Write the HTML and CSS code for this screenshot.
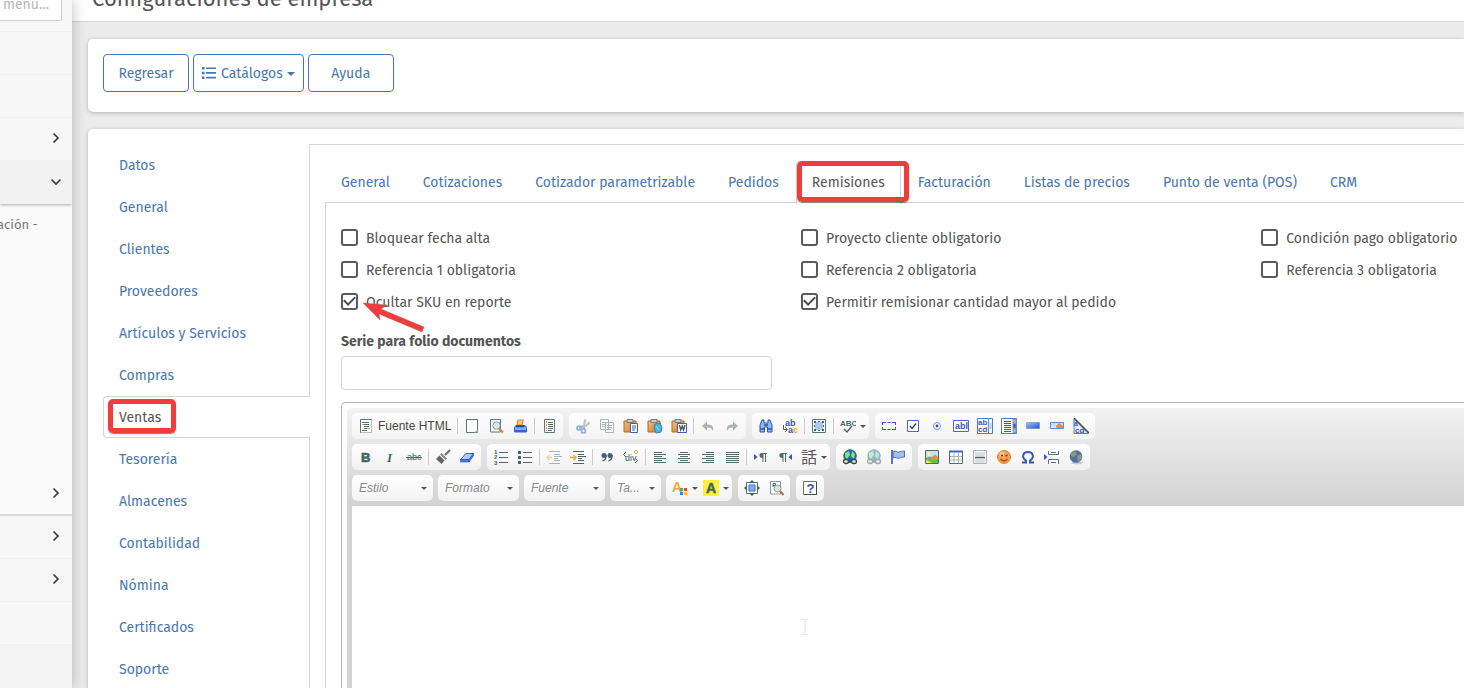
FILE: index.html
```html
<!DOCTYPE html>
<html lang="es">
<head>
<meta charset="utf-8">
<title>Configuraciones de empresa</title>
<link rel="stylesheet" href="styles.css">
</head>
<body>
<svg class="paints" aria-hidden="true">
  <defs>
    <linearGradient id="gBlue" x1="0" y1="0" x2="1" y2="1"><stop offset="0" stop-color="#9cc4f4"/><stop offset="1" stop-color="#2a50c8"/></linearGradient>
    <linearGradient id="gClip" x1="0" y1="0" x2="1" y2="1"><stop offset="0" stop-color="#f8c27c"/><stop offset="1" stop-color="#cf7420"/></linearGradient>
  </defs>
</svg>
<svg class="sprite" aria-hidden="true">
  <symbol id="right" viewBox="0 0 16 16"><path d="M5.500 3.500 10 8l-4.500 4.500" fill="none" stroke="#3b3b3b" stroke-width="1.700"/></symbol>
  <symbol id="down" viewBox="0 0 16 16"><path d="M3.500 5.500 8 10l4.500-4.500" fill="none" stroke="#3b3b3b" stroke-width="1.700"/></symbol>
  <symbol id="list" viewBox="0 0 16 16"><path d="M1 2h2.500v2.500H1zm0 4.700h2.500v2.500H1zm0 4.700h2.500v2.500H1zM5 2.400h10v1.700H5zm0 4.700h10v1.700H5zm0 4.700h10v1.700H5z" fill="#4877b5"/></symbol>
  <symbol id="source" viewBox="0 0 16 16"><path d="M2.500 1.500h11v13h-11z" fill="#fff" stroke="#5d7777"/><path d="M13.500 2v12.500H3" fill="none" stroke="#b8c2c2"/><path d="M4 4.500h7M6 6.500h5M6 8.500h5M6 10.500h3M4 12.500h5" stroke="#526c6c"/><path d="M4 6.500h2M9 10.500h3" stroke="#f0a040"/></symbol>
  <symbol id="new" viewBox="0 0 16 16"><path d="M2.500 1.500h11v13h-11z" fill="#fcfcfc" stroke="#5d7777"/><path d="M10 14.500l3.500-3v3z" fill="#aab8b8"/></symbol>
  <symbol id="preview" viewBox="0 0 16 16"><path d="M2.500 1.500h10v12.500h-10z" fill="#fff" stroke="#5d7777"/><circle cx="8.500" cy="7.500" r="3.700" fill="#dfe6ea" stroke="#8a9ba0"/><path d="M11 10.500l4 4" stroke="#c98744" stroke-width="2.200"/></symbol>
  <symbol id="print" viewBox="0 0 16 16"><path d="M5 7l1-5h5l-1 5z" fill="#fbc583" stroke="#e08f38" stroke-width="1.200"/><path d="M4 7.500h9l1.500 2v4.500h-12V9.500z" fill="#7fb0f2" stroke="#3a62c8"/><path d="M4 8.500h8.500" stroke="#1f3f92" stroke-width="1.500"/><path d="M3 13h11" stroke="#3a62d8" stroke-width="2"/></symbol>
  <symbol id="template" viewBox="0 0 16 16"><path d="M3.500 1.500h10v13h-10z" fill="#fff" stroke="#5d7777"/><path d="M7 4.500h5M7 6.500h5M7 8.500h5M7 10.500h5M7 12.500h4" stroke="#526c6c"/><path d="M5.500 3v10" stroke="#f0a040" stroke-dasharray="2 1"/></symbol>
  <symbol id="cut" viewBox="0 0 16 16" opacity=".55"><path d="M9 1l-1 7 1.500 1 2-7zM14 3l-6 6 1 1 6-4z" fill="#8da0a4"/><path d="M8 8l-4 2M9 9v3" stroke="#4a72cc" stroke-width="2"/><circle cx="4" cy="10" r="2" fill="none" stroke="#4a72cc" stroke-width="1.700"/><circle cx="8.500" cy="13" r="2" fill="none" stroke="#4a72cc" stroke-width="1.700"/></symbol>
  <symbol id="copy" viewBox="0 0 16 16" opacity=".5"><path d="M1.500 1.500h8v10h-8zM6.500 4.500h8v10h-8z" fill="#fff" stroke="#5d7777"/><path d="M3 4.500h4M3 6.500h3M3 8.500h3M8 7.500h5M8 9.500h5M8 11.500h4" stroke="#5d7777"/></symbol>
  <symbol id="clip" viewBox="0 0 16 16"><path d="M1 3h12v11H1z" fill="url(#gClip)" stroke="#ad6a28"/><path d="M4 1.500h6v3H4z" fill="#c9ced2" stroke="#777"/></symbol>
  <symbol id="paste" viewBox="0 0 16 16"><use href="#clip"/><path d="M7.500 5.500h7v9h-7z" fill="#fff" stroke="#3d62bd"/><path d="M9 8h4M9 10h4M9 12h3" stroke="#4b62ba"/></symbol>
  <symbol id="pastetext" viewBox="0 0 16 16"><use href="#clip"/><path d="M8 6l5-1 2 4-1 5-5 1-2-5z" fill="#48b5dc" stroke="#298abf"/><path d="M9 8l3 4" stroke="#a5e2f1"/></symbol>
  <symbol id="pasteword" viewBox="0 0 16 16"><use href="#clip"/><path d="M6.500 5.500h9v9h-9z" fill="#fff" stroke="#3d62bd"/><path d="M8.500 7l1.200 5 1.500-4 1.300 4 1.500-5" fill="none" stroke="#445566" stroke-width="1.300"/></symbol>
  <symbol id="undo" viewBox="0 0 16 16"><path d="M2 8l5-4.500V6.500c5 0 7 2 6 6.500-1-2.500-2.500-3.500-6-3.500v3z" fill="#a8b5b5"/></symbol>
  <symbol id="redo" viewBox="0 0 16 16"><path d="M14 8L9 3.500V6.500c-5 0-7 2-6 6.500 1-2.500 2.500-3.500 6-3.500v3z" fill="#a8b5b5"/></symbol>
  <symbol id="find" viewBox="0 0 16 16"><path d="M4 2h2v3h4V2h2l2 5v7H9.500V9h-3v5H2V7z" fill="#8dbcf5" stroke="#304eaa"/><path d="M6 7h4M2 11h4M10 11h4" stroke="#304eaa" stroke-width="1.500"/></symbol>
  <symbol id="replace" viewBox="0 0 16 16"><text x="3" y="8" font-size="9" font-weight="bold" fill="#4351b5">ab</text><path d="M1.500 7v4.500H5M3 9l2.500 2.500L3 14" fill="none" stroke="#4351b5"/><text x="6" y="15" font-size="9" font-weight="bold" fill="#4351b5">a<tspan fill="#f0a040">c</tspan></text></symbol>
  <symbol id="selectall" viewBox="0 0 16 16"><path d="M1.500 1.500h13v13h-13z" fill="#fff" stroke="#5a7474"/><path d="M4 4h8v8H4z" fill="#a9c7f3"/><path d="M3 3h2v2H3zm8 0h2v2h-2zM3 11h2v2H3zm8 0h2v2h-2zM7 3h2v1H7zm0 9h2v1H7zM3 7h1v2H3zm9 0h1v2h-1z" fill="#456464"/></symbol>
  <symbol id="spell" viewBox="0 0 16 16"><text x="0" y="8" font-size="8" font-weight="bold" fill="#4d6868">ABC</text><path d="M4 11l3 3 5-6" fill="none" stroke="#4d6868" stroke-width="1.500"/></symbol>
  <symbol id="form" viewBox="0 0 16 16"><path d="M2 4.500h12M2 11.500h12" stroke="#4351b5" stroke-dasharray="3 1.500"/><path d="M1.500 4v3M1.500 9v3M14.500 4v3M14.500 9v3" stroke="#4351b5"/></symbol>
  <symbol id="check" viewBox="0 0 16 16"><path d="M2.500 2.500h11v11h-11z" fill="#fff" stroke="#4b67c8"/><path d="M5 8l2 2.500 4-5" fill="none" stroke="#443366" stroke-width="1.300"/></symbol>
  <symbol id="radio" viewBox="0 0 16 16"><circle cx="8" cy="8" r="3.500" fill="#fff" stroke="#7b8ee0"/><circle cx="8" cy="8" r="1.400" fill="#3540a8"/></symbol>
  <symbol id="textfield" viewBox="0 0 16 16"><path d="M.5 2.500h15v11H.5z" fill="#fff" stroke="#4b67c8"/><text x="2" y="11" font-size="9" font-weight="bold" fill="#4351b5">abl</text></symbol>
  <symbol id="textarea" viewBox="0 0 16 16"><path d="M.5.5h15v15H.5z" fill="#fff" stroke="#4b7ed8"/><path d="M11.500 0v16" stroke="#5c8fdf"/><path d="M12.500 5h2v6h-2z" fill="#a9c7f3"/><text x="1" y="7" font-size="8" font-weight="bold" fill="#4351b5">ab</text><text x="1" y="14" font-size="8" font-weight="bold" fill="#4351b5">cd</text></symbol>
  <symbol id="select" viewBox="0 0 16 16"><path d="M.5.5h15v15H.5z" fill="#fff" stroke="#4b7ed8"/><path d="M11.500 1h4v14h-4z" fill="#7a9de0"/><path d="M3 3.500h7M3 5.500h7M3 7.500h7M3 9.500h7M3 11.500h7M3 13.500h7" stroke="#4351b5"/><path d="M12.500 3h2M12.500 13h2" stroke="#f3b05a" stroke-width="2"/><path d="M12.500 6h2v4h-2z" fill="#3f55bd"/></symbol>
  <symbol id="button" viewBox="0 0 16 16"><path d="M1.500 4.500h13v6h-13z" fill="url(#gBlue)" stroke="#5a86de" stroke-width=".6"/></symbol>
  <symbol id="imgbutton" viewBox="0 0 16 16"><path d="M1.500 4.500h13v6h-13z" fill="#c7def8" stroke="#5a8ad8"/><path d="M7 10V8l3-3 4 3v2z" fill="#ef8c3a"/><path d="M2 10c2-3 4-2 6 0z" fill="#fbeec0"/></symbol>
  <symbol id="hidden" viewBox="0 0 16 16"><path d="M1 1l14 14.500H1z" fill="#e7efff" stroke="#4b7ed8"/><path d="M1 0l15 15" stroke="#555" stroke-width="1.500"/><text x="1" y="8" font-size="7" font-weight="bold" fill="#4351b5">a</text><text x="2" y="15" font-size="8" font-weight="bold" fill="#4351b5">cd</text></symbol>
  <symbol id="bold" viewBox="0 0 16 16"><text x="3" y="12.500" font-size="13" font-weight="900" fill="#456464" stroke="#456464" stroke-width=".6">B</text></symbol>
  <symbol id="italic" viewBox="0 0 16 16"><text x="5" y="12.500" font-size="13" font-weight="bold" font-style="italic" class="serif" fill="#456464">I</text></symbol>
  <symbol id="strike" viewBox="0 0 16 16"><text x="1" y="11" font-size="9" fill="#456464">abc</text><path d="M0 8.500h16" stroke="#456464"/></symbol>
  <symbol id="brush" viewBox="0 0 16 16"><path d="M15 1L10 6" stroke="#777" stroke-width="2.400"/><path d="M6.500 4l5.500 5.500-1.500 1.500L5 5.500z" fill="#888"/><path d="M4.500 6.500l5 5L6.500 15 1 10z" fill="#666"/></symbol>
  <symbol id="eraser" viewBox="0 0 16 16"><path d="M1.500 10.500L7 4.500h7.500L10 10.500z" fill="#a9cbf6" stroke="#3d62c5"/><path d="M1.500 10.500H10v2.500H1.500zM10 13l4.500-6V4.500L10 10.500z" fill="#4c78e0" stroke="#2c4fb5" stroke-width=".6"/></symbol>
  <symbol id="ol" viewBox="0 0 16 16"><path d="M6 3.500h9M6 8.500h9M6 13.500h9" stroke="#526c6c"/><g font-size="6" font-weight="bold" fill="#456464"><text x="1" y="5">1</text><text x="1" y="10">2</text><text x="1" y="15.500">3</text></g></symbol>
  <symbol id="ul" viewBox="0 0 16 16"><path d="M6 3.500h9M6 8.500h9M6 13.500h9" stroke="#526c6c"/><path d="M1 2h3v3H1zm0 5h3v3H1zm0 5h3v3H1z" fill="#456464"/></symbol>
  <symbol id="indent" viewBox="0 0 16 16"><path d="M3 2.500h11M8 5.500h6M8 7.500h8M8 9.500h4M8 11.500h6M3 14.500h11" stroke="#456464"/><path d="M0 8.500h5M3.500 6l2.500 2.500L3.500 11" fill="none" stroke="#f0a040" stroke-width="1.400"/></symbol>
  <symbol id="outdent" viewBox="0 0 16 16" opacity=".45"><path d="M3 2.500h11M8 5.500h6M8 7.500h8M8 9.500h4M8 11.500h6M3 14.500h11" stroke="#456464"/><path d="M1 8.500h5M3.500 6L1 8.500 3.500 11" fill="none" stroke="#f0a040" stroke-width="1.400"/></symbol>
  <symbol id="quote" viewBox="0 0 16 16"><circle cx="5" cy="6.500" r="2.500" fill="#456464"/><circle cx="11" cy="6.500" r="2.500" fill="#456464"/><path d="M7 6c.5 3-1 5-3.500 6M13 6c.5 3-1 5-3.500 6" fill="none" stroke="#456464" stroke-width="1.300"/></symbol>
  <symbol id="div" viewBox="0 0 16 16"><path d="M3 3L.5 5.500 3 8M12 9l2.500 2.500L12 14" fill="none" stroke="#456464"/><text x="2" y="12" font-size="9" fill="#456464">div</text><path d="M13 1l2 2-2 2-2-2z" fill="none" stroke="#f0a040"/></symbol>
  <symbol id="aleft" viewBox="0 0 16 16"><path d="M2 3.500h8M2 5.500h12M2 7.500h8M2 9.500h12M2 11.500h8M2 13.500h12" stroke="#526c6c"/></symbol>
  <symbol id="acenter" viewBox="0 0 16 16"><path d="M4 3.500h8M2 5.500h12M4 7.500h8M2 9.500h12M4 11.500h8M2 13.500h12" stroke="#526c6c"/></symbol>
  <symbol id="aright" viewBox="0 0 16 16"><path d="M6 3.500h8M2 5.500h12M6 7.500h8M2 9.500h12M6 11.500h8M2 13.500h12" stroke="#526c6c"/></symbol>
  <symbol id="ajust" viewBox="0 0 16 16"><path d="M2 3.500h13M2 5.500h13M2 7.500h13M2 9.500h13M2 11.500h13M2 13.500h13" stroke="#526c6c"/></symbol>
  <symbol id="pil" viewBox="0 0 16 16"><path d="M8.500 4H14v1h-1v8h-1V5h-1.500v8h-1V9C5.500 9 5.500 4 8.500 4z" fill="#526c6c"/></symbol>
  <symbol id="ltr" viewBox="0 0 16 16"><path d="M1 5l3.500 3L1 11z" fill="#4351b5"/><use href="#pil"/></symbol>
  <symbol id="rtl" viewBox="0 0 16 16"><use href="#pil" x="-4" width="16" height="16"/><path d="M15 5l-3.500 3L15 11z" fill="#4351b5"/></symbol>
  <symbol id="lang" viewBox="0 0 16 16"><text x="0" y="14" font-size="16" class="cjk" fill="#5a5a5a">話</text></symbol>
  <symbol id="link" viewBox="0 0 16 16"><circle cx="8" cy="7" r="6.200" fill="#2d62c4" stroke="#254c8e"/><path d="M3 4l4-2 1 4-3 4-2-2zM10 2l3 3-1 5-3-3z" fill="#7bea6b"/><path d="M5 12.500h6" stroke="#324b4b" stroke-width="2"/><rect x="1.500" y="10.500" width="5" height="4" rx="2" fill="#dfe8e8" stroke="#324b4b" stroke-width="1.300"/><rect x="9.500" y="10.500" width="5" height="4" rx="2" fill="#dfe8e8" stroke="#324b4b" stroke-width="1.300"/></symbol>
  <symbol id="unlink" viewBox="0 0 16 16" opacity=".45"><use href="#link"/></symbol>
  <symbol id="anchor" viewBox="0 0 16 16"><path d="M2 1v14" stroke="#3b4fb8" stroke-width="1.600"/><path d="M3 2.500c3-1.500 4 1.500 6 .5s3-.5 5.500-1v6c-3 .5-3 0-5 1s-4-1.500-6.500 0z" fill="#a9bfdf" stroke="#4c6bc4"/></symbol>
  <symbol id="image" viewBox="0 0 16 16"><path d="M1.500 1.500h13v13h-13z" fill="#bfe0f8" stroke="#5a6a5a"/><path d="M2 9c4-3 7 0 12-1v6H2z" fill="#70b848"/><circle cx="5" cy="5" r="2" fill="#fff2a0"/><path d="M8 11V8l3-2.500L14 8v3z" fill="#f08c3a"/><path d="M2 14v-3l7 3z" fill="#f7e070"/></symbol>
  <symbol id="table" viewBox="0 0 16 16"><path d="M1.500 2.500h13v12h-13z" fill="#fff" stroke="#5a6e6e"/><path d="M1 2.500h14" stroke="#3b62d0" stroke-width="2"/><path d="M2 7.500h12M2 11h12M6 4v10M10.500 4v10" stroke="#a9b3b3"/></symbol>
  <symbol id="hr" viewBox="0 0 16 16"><path d="M1.500 1.500h13v13h-13z" fill="#fff" stroke="#aab3b3"/><path d="M3 4h10M3 6h10M3 11h10M3 13h10" stroke="#b6bebe"/><path d="M3 8.500h10" stroke="#456464" stroke-width="1.600"/></symbol>
  <symbol id="smiley" viewBox="0 0 16 16"><circle cx="8" cy="8" r="6.500" fill="#f5a04a" stroke="#de8230"/><circle cx="6" cy="5" r="2.500" fill="#fbc98b"/><path d="M5 6.500h2M9.500 6.500h2" stroke="#6b3d10" stroke-width="1.500"/><path d="M4.500 10c2 2.500 5 2.500 7 0" fill="none" stroke="#b8431d" stroke-width="1.500"/></symbol>
  <symbol id="omega" viewBox="0 0 16 16"><path d="M2 13.500h4v-2C1 8 3 3 8 3s7 5 2 8.500v2h4" fill="none" stroke="#3b55c0" stroke-width="2"/></symbol>
  <symbol id="break" viewBox="0 0 16 16"><path d="M4.500 2v3.500h10V2M4.500 15v-4.500h10V15" fill="#fff" stroke="#5d7777"/><path d="M7 3.500h5M7 13.500h5" stroke="#5d7777"/><path d="M0 5l3.500 3L0 11z" fill="#3b55c0"/></symbol>
  <symbol id="globe" viewBox="0 0 16 16"><ellipse cx="9" cy="14" rx="6" ry="1.500" fill="#ccc"/><circle cx="8" cy="7.500" r="6.300" fill="#4c71a8"/><path d="M3 4l4-2 2 3-3 3-3-1zM9 7l4-2 1 4-4 4z" fill="#8b9a78"/></symbol>
  <symbol id="color" viewBox="0 0 16 16"><text x="0" y="12" font-size="14" font-weight="bold" fill="#f0a24c">A</text><path d="M8 8h3v3H8z" fill="#48b648"/><path d="M12 8h3v3h-3z" fill="#ee4040"/><path d="M8 12h3v3H8z" fill="#3c7bea"/><path d="M12 12h3v3h-3z" fill="#f7c325"/></symbol>
  <symbol id="bgcolor" viewBox="0 0 16 16"><path d="M0 0h16v16H0z" fill="#fff23a"/><text x="3" y="13" font-size="14" font-weight="bold" fill="#456464" stroke="#456464" stroke-width=".5">A</text></symbol>
  <symbol id="maximize" viewBox="0 0 16 16"><path d="M2.500 2.500h11v11h-11z" fill="#fff" stroke="#4f6b78"/><path d="M5 5h6v6H5z" fill="#7fb1f5" stroke="#3b6fd0"/><path d="M8 0l2.500 2.500h-5zM8 16l2.500-2.500h-5zM0 8l2.500-2.500v5zM16 8l-2.500-2.500v5z" fill="#456464"/></symbol>
  <symbol id="blocks" viewBox="0 0 16 16"><path d="M2.500 1.500h10v12.500h-10z" fill="#fff" stroke="#8a9999"/><path d="M5 7V3.500h2.500v2H5" fill="none" stroke="#456464"/><circle cx="9.500" cy="8.500" r="3.500" fill="#dfe3e6" stroke="#999"/><path d="M12 11l3.500 4" stroke="#a87444" stroke-width="2"/></symbol>
  <symbol id="about" viewBox="0 0 16 16"><path d="M1.500 1.500h13v13h-13z" fill="#fff" stroke="#5d7777"/><path d="M14.500 2v12.500H2" fill="none" stroke="#394f50"/><text x="4.500" y="13" font-size="13" font-weight="bold" fill="#3b48b8">?</text></symbol>
</svg>

<div class="app">
  <aside class="side">
    <div class="side-search"><input type="text" aria-label="Buscar en el menú" placeholder="l menu..."></div>
    <div class="side-row"></div>
    <div class="side-row"></div>
    <div class="side-row"><svg><use href="#right"/></svg></div>
    <div class="side-row side-open"><svg><use href="#down"/></svg></div>
    <div class="side-sub">
      <span class="side-text">ación -</span>
      <div class="side-row side-last"><svg><use href="#right"/></svg></div>
    </div>
    <div class="side-row"><svg><use href="#right"/></svg></div>
    <div class="side-row"><svg><use href="#right"/></svg></div>
    <div class="side-row"></div>
    <div class="side-rest"></div>
  </aside>

  <main class="main">
    <header class="head"><h1>Configuraciones de empresa</h1></header>

    <section class="card actions">
      <button type="button" class="btn">Regresar</button>
      <button type="button" class="btn btn-menu"><svg><use href="#list"/></svg>Catálogos<i class="caret"></i></button>
      <button type="button" class="btn">Ayuda</button>
    </section>

    <section class="card config">
      <nav class="vtabs">
        <a href="#">Datos</a>
        <a href="#">General</a>
        <a href="#">Clientes</a>
        <a href="#">Proveedores</a>
        <a href="#">Artículos y Servicios</a>
        <a href="#">Compras</a>
        <a href="#" class="on">Ventas<span class="mark mark-v"></span></a>
        <a href="#">Tesorería</a>
        <a href="#">Almacenes</a>
        <a href="#">Contabilidad</a>
        <a href="#">Nómina</a>
        <a href="#">Certificados</a>
        <a href="#">Soporte</a>
      </nav>
      <div class="pane">
        <nav class="htabs">
          <a href="#">General</a>
          <a href="#">Cotizaciones</a>
          <a href="#">Cotizador parametrizable</a>
          <a href="#">Pedidos</a>
          <a href="#" class="on">Remisiones<span class="mark mark-h"></span></a>
          <a href="#">Facturación</a>
          <a href="#">Listas de precios</a>
          <a href="#">Punto de venta (POS)</a>
          <a href="#">CRM</a>
        </nav>
        <div class="inner">
          <div class="grid">
            <label><input type="checkbox">Bloquear fecha alta</label>
            <label><input type="checkbox">Proyecto cliente obligatorio</label>
            <label><input type="checkbox">Condición pago obligatorio</label>
            <label><input type="checkbox">Referencia 1 obligatoria</label>
            <label><input type="checkbox">Referencia 2 obligatoria</label>
            <label><input type="checkbox">Referencia 3 obligatoria</label>
            <label class="pointed"><input type="checkbox" checked>Ocultar SKU en reporte
              <svg class="arrow" viewBox="0 0 64 32"><path d="M1 2l24 2-6 4 43 18-2 5L17 13l1 6z" fill="#f23b3b" stroke="#8f5a5a" stroke-width=".4"/></svg>
            </label>
            <label><input type="checkbox" checked>Permitir remisionar cantidad mayor al pedido</label>
          </div>
          <div class="grid field">
            <div><label for="serie">Serie para folio documentos</label><input id="serie" type="text"></div>
          </div>

          <div class="editor">
            <div class="frame">
              <div class="tools">
                <div class="row">
                  <div class="grp">
                    <button type="button" class="wide"><svg><use href="#source"/></svg>Fuente HTML</button><hr>
                    <button type="button" aria-label="Nueva"><svg><use href="#new"/></svg></button>
                    <button type="button" aria-label="Vista previa"><svg><use href="#preview"/></svg></button>
                    <button type="button" aria-label="Imprimir"><svg><use href="#print"/></svg></button><hr>
                    <button type="button" aria-label="Plantillas"><svg><use href="#template"/></svg></button>
                  </div>
                  <div class="grp">
                    <button type="button" aria-label="Cortar"><svg><use href="#cut"/></svg></button>
                    <button type="button" aria-label="Copiar"><svg><use href="#copy"/></svg></button>
                    <button type="button" aria-label="Pegar"><svg><use href="#paste"/></svg></button>
                    <button type="button" aria-label="Pegar texto"><svg><use href="#pastetext"/></svg></button>
                    <button type="button" aria-label="Pegar Word"><svg><use href="#pasteword"/></svg></button><hr>
                    <button type="button" aria-label="Deshacer"><svg><use href="#undo"/></svg></button>
                    <button type="button" aria-label="Rehacer"><svg><use href="#redo"/></svg></button>
                  </div>
                  <div class="grp">
                    <button type="button" aria-label="Buscar"><svg><use href="#find"/></svg></button>
                    <button type="button" aria-label="Reemplazar"><svg><use href="#replace"/></svg></button><hr>
                    <button type="button" aria-label="Seleccionar todo"><svg><use href="#selectall"/></svg></button><hr>
                    <button type="button" class="drop" aria-label="Ortografía"><svg><use href="#spell"/></svg><i class="tri"></i></button>
                  </div>
                  <div class="grp">
                    <button type="button" aria-label="Formulario"><svg><use href="#form"/></svg></button>
                    <button type="button" aria-label="Casilla"><svg><use href="#check"/></svg></button>
                    <button type="button" aria-label="Opción"><svg><use href="#radio"/></svg></button>
                    <button type="button" aria-label="Campo de texto"><svg><use href="#textfield"/></svg></button>
                    <button type="button" aria-label="Área de texto"><svg><use href="#textarea"/></svg></button>
                    <button type="button" aria-label="Selección"><svg><use href="#select"/></svg></button>
                    <button type="button" aria-label="Botón"><svg><use href="#button"/></svg></button>
                    <button type="button" aria-label="Botón imagen"><svg><use href="#imgbutton"/></svg></button>
                    <button type="button" aria-label="Campo oculto"><svg><use href="#hidden"/></svg></button>
                  </div>
                </div>
                <div class="row">
                  <div class="grp">
                    <button type="button" aria-label="Negrita"><svg><use href="#bold"/></svg></button>
                    <button type="button" aria-label="Cursiva"><svg><use href="#italic"/></svg></button>
                    <button type="button" aria-label="Tachado"><svg><use href="#strike"/></svg></button><hr>
                    <button type="button" aria-label="Copiar formato"><svg><use href="#brush"/></svg></button>
                    <button type="button" aria-label="Eliminar formato"><svg><use href="#eraser"/></svg></button>
                  </div>
                  <div class="grp">
                    <button type="button" aria-label="Numeración"><svg><use href="#ol"/></svg></button>
                    <button type="button" aria-label="Viñetas"><svg><use href="#ul"/></svg></button><hr>
                    <button type="button" aria-label="Disminuir sangría"><svg><use href="#outdent"/></svg></button>
                    <button type="button" aria-label="Aumentar sangría"><svg><use href="#indent"/></svg></button><hr>
                    <button type="button" aria-label="Cita"><svg><use href="#quote"/></svg></button>
                    <button type="button" aria-label="Contenedor"><svg><use href="#div"/></svg></button><hr>
                    <button type="button" aria-label="Izquierda"><svg><use href="#aleft"/></svg></button>
                    <button type="button" aria-label="Centrar"><svg><use href="#acenter"/></svg></button>
                    <button type="button" aria-label="Derecha"><svg><use href="#aright"/></svg></button>
                    <button type="button" aria-label="Justificar"><svg><use href="#ajust"/></svg></button><hr>
                    <button type="button" aria-label="Izquierda a derecha"><svg><use href="#ltr"/></svg></button>
                    <button type="button" aria-label="Derecha a izquierda"><svg><use href="#rtl"/></svg></button>
                    <button type="button" class="drop" aria-label="Idioma"><svg><use href="#lang"/></svg><i class="tri"></i></button>
                  </div>
                  <div class="grp">
                    <button type="button" aria-label="Enlace"><svg><use href="#link"/></svg></button>
                    <button type="button" aria-label="Quitar enlace"><svg><use href="#unlink"/></svg></button>
                    <button type="button" aria-label="Ancla"><svg><use href="#anchor"/></svg></button>
                  </div>
                  <div class="grp">
                    <button type="button" aria-label="Imagen"><svg><use href="#image"/></svg></button>
                    <button type="button" aria-label="Tabla"><svg><use href="#table"/></svg></button>
                    <button type="button" aria-label="Línea"><svg><use href="#hr"/></svg></button>
                    <button type="button" aria-label="Emoticón"><svg><use href="#smiley"/></svg></button>
                    <button type="button" aria-label="Símbolo"><svg><use href="#omega"/></svg></button>
                    <button type="button" aria-label="Salto de página"><svg><use href="#break"/></svg></button>
                    <button type="button" aria-label="Marco"><svg><use href="#globe"/></svg></button>
                  </div>
                </div>
                <div class="row">
                  <div class="combo"><select aria-label="Estilo"><option>Estilo</option></select><i class="tri"></i></div>
                  <div class="combo"><select aria-label="Formato"><option>Formato</option></select><i class="tri"></i></div>
                  <div class="combo"><select aria-label="Fuente"><option>Fuente</option></select><i class="tri"></i></div>
                  <div class="combo small"><select aria-label="Tamaño"><option>Ta...</option></select><i class="tri"></i></div>
                  <div class="grp">
                    <button type="button" class="drop" aria-label="Color de texto"><svg><use href="#color"/></svg><i class="tri"></i></button>
                    <button type="button" class="drop" aria-label="Color de fondo"><svg><use href="#bgcolor"/></svg><i class="tri"></i></button>
                  </div>
                  <div class="grp">
                    <button type="button" aria-label="Maximizar"><svg><use href="#maximize"/></svg></button>
                    <button type="button" aria-label="Mostrar bloques"><svg><use href="#blocks"/></svg></button>
                  </div>
                  <div class="grp">
                    <button type="button" aria-label="Acerca de"><svg><use href="#about"/></svg></button>
                  </div>
                </div>
              </div>
              <div class="area" contenteditable="true" aria-label="Contenido">
                <svg class="ibeam" viewBox="0 0 8 16"><path d="M.5.5h3M4.500.5h3M.5 15.500h3M4.500 15.500h3M4 1v14" stroke="#e3e3e3" fill="none"/></svg>
              </div>
            </div>
          </div>
        </div>
      </div>
    </section>
  </main>
</div>
</body>
</html>
```
FILE: styles.css
```css
* { box-sizing: border-box; }
body {
  margin: 0;
  height: 100vh;
  overflow: hidden;
  background: #ececec;
  color: #555;
  font: 14px/20px "Trebuchet MS", "Fira Sans", Ubuntu, "DejaVu Sans Condensed", sans-serif;
}
input, button, select { font: inherit; color: inherit; }
a { color: #4877b5; text-decoration: none; }
svg { width: 16px; height: 16px; flex: none; }
svg text { font-family: "Liberation Sans", Arial, sans-serif; }
svg text.serif { font-family: "Liberation Serif", serif; }
svg text.cjk { font-family: "Noto Sans CJK JP", sans-serif; }
.paints { position: absolute; width: 0; height: 0; }
.sprite { display: none; }

.app { display: flex; height: 100%; }

.side {
  flex: none;
  width: 72px;
  display: flex;
  flex-direction: column;
  background: #f7f7f7;
  box-shadow: 2px 0 12px rgba(0, 0, 0, .2);
  position: relative;
  z-index: 1;
}
.side-search {
  flex: none;
  height: 32px;
  padding: 0 10px 10px 0;
  border-bottom: 1px solid #f0f0f0;
  display: flex;
  align-items: flex-end;
}
.side-search input {
  flex: 1;
  min-width: 0;
  height: 34px;
  margin-left: -12px;
  padding: 0 12px 0 0;
  border: 1px solid #d0d0d0;
  border-radius: 2px;
  background: #fff;
  text-align: right;
}
.side-search input::placeholder { color: #b8b8b8; opacity: 1; }
.side-row {
  flex: none;
  height: 43px;
  padding: 0 8px 2px 0;
  border-bottom: 1px solid #f1f1f1;
  display: flex;
  align-items: center;
  justify-content: flex-end;
}
.side-open { background: #f2f2f2; border-bottom: 0; box-shadow: 0 1px 3px rgba(0, 0, 0, .3); clip-path: inset(0 0 -4px); }
.side-sub {
  flex: none;
  height: 312px;
  display: flex;
  flex-direction: column;
  justify-content: space-between;
  background: #fbfbfb;
  border-bottom: 2px solid #dcdcdc;
}
.side-text { padding-top: 11px; margin-left: -3px; font-size: 13px; color: #777; }
.side-last { border: 0; padding-bottom: 0; }
.side-rest { flex: 1; background: #f3f3f3; }

.main { flex: 1; min-width: 0; display: flex; flex-direction: column; }
.head {
  flex: none;
  height: 22px;
  padding: 0 20px 8px;
  display: flex;
  align-items: flex-end;
  background: #fff;
  border-bottom: 1px solid #d4d4d4;
}
.head h1 { margin: 0; font-size: 22px; line-height: 28px; font-weight: normal; }
.card {
  margin: 17px 0 0 16px;
  padding: 15px 0 0 15px;
  background: #fff;
  border-radius: 5px 0 0 5px;
  box-shadow: 0 1px 4px rgba(0, 0, 0, .25);
}
.actions { flex: none; display: flex; gap: 4px; padding-bottom: 20px; align-items: flex-start; }
.btn {
  height: 38px;
  min-width: 86px;
  padding: 2px 8px 0;
  border: 1px solid #4877b5;
  border-radius: 4px;
  background: #fff;
  color: #4877b5;
}
.btn-menu { display: flex; align-items: center; gap: 4px; padding: 2px 8px 0 7px; }
.btn-menu svg { margin-bottom: 2px; }
.caret { border: 4px solid transparent; border-top-color: #4877b5; border-bottom: 0; }

.config { flex: 1; min-height: 0; display: flex; border-radius: 5px 0 0 0; }
.vtabs { flex: none; width: 206px; display: flex; flex-direction: column; }
.vtabs a { flex: none; height: 42px; padding: 12px 16px 0; position: relative; }
.vtabs .on {
  margin-right: -1px;
  padding: 11px 15px 0;
  background: #fff;
  border: 1px solid #d6d6d6;
  border-right: 0;
  border-radius: 4px 0 0 4px;
  z-index: 1;
}
.vtabs .on, .htabs .on { color: #555; }
.mark { position: absolute; border: 5px solid #f23b3b; border-radius: 5px; box-shadow: 0 1px 1px rgba(0, 0, 0, .5); }
.mark-v { left: 4px; top: 2px; width: 68px; height: 34px; }
.mark-h { left: 0; top: -1px; right: -9px; bottom: 2px; }

.pane {
  flex: 1;
  min-width: 0;
  display: flex;
  flex-direction: column;
  padding: 16px 0 0 15px;
  border: 1px solid #d6d6d6;
  border-width: 1px 0 0 1px;
}
.htabs { flex: none; display: flex; gap: 1px; }
.htabs a { flex: none; height: 42px; padding: 12px 16px 0; position: relative; white-space: nowrap; }
.htabs .on {
  padding: 11px 15px 0;
  margin-bottom: -1px;
  height: 43px;
  background: #fff;
  border: 1px solid #d6d6d6;
  border-bottom: 0;
  border-radius: 4px 4px 0 0;
  z-index: 1;
}
.inner {
  flex: 1;
  min-height: 0;
  display: flex;
  flex-direction: column;
  padding: 19px 0 0 15px;
  border: 1px solid #d6d6d6;
  border-width: 1px 0 0 1px;
  margin-top: -1px;
}
.grid { flex: none; display: grid; grid-template-columns: minmax(0, 17fr) minmax(0, 17fr) minmax(0, 8fr); column-gap: 29px; }
.grid > label { height: 32px; padding-top: 2px; display: flex; align-items: center; gap: 8px; white-space: nowrap; position: relative; }
input[type="checkbox"] {
  appearance: none;
  flex: none;
  width: 17px;
  height: 17px;
  margin: 0 0 4px;
  border: 2px solid #5a5a5a;
  border-radius: 3px;
  background: #fff;
  display: grid;
  place-items: center;
}
input[type="checkbox"]:checked::before {
  content: "";
  width: 9px;
  height: 5px;
  margin-bottom: 3px;
  border: solid #4a4a4a;
  border-width: 0 0 2px 2px;
  transform: rotate(-45deg);
}
.arrow { position: absolute; left: 21px; top: 15px; width: 64px; height: 32px; }
.field { padding-top: 14px; }
.field label { display: block; font-weight: bold; margin-bottom: 4px; }
.field input { display: block; width: 100%; height: 34px; padding: 0 10px; border: 1px solid #d6d6d6; border-radius: 4px; }

.editor {
  flex: 1;
  min-height: 0;
  display: flex;
  margin-top: 12px;
  padding: 5px 0 0 5px;
  border: 1px solid #b6b6b6;
  border-width: 1px 0 0 1px;
  border-radius: 5px 0 0 0;
}
.frame { flex: 1; min-width: 0; display: flex; flex-direction: column; padding-left: 5px; border-radius: 5px 0 0 0; background: linear-gradient(#f2f2f2, #d2d2d2 98px); }
.tools { flex: none; padding: 5px 0; display: flex; flex-direction: column; gap: 5px; font: 12px/16px "Liberation Sans", Arial, sans-serif; color: #444; }
.row { display: flex; gap: 6px; }
.grp, .combo { flex: none; height: 26px; border-radius: 5px; background: linear-gradient(#fff, #f2f2f2); }
.grp { display: flex; align-items: center; padding: 0 2px; }
.row:first-child .grp { background: linear-gradient(#fdfdfd, #f4f4f4); }
.grp button { width: 24px; height: 24px; padding: 0 4px; border: 0; background: none; display: flex; align-items: center; gap: 4px; }
.grp button.wide { width: auto; }
.grp .drop { width: 31px; padding-right: 0; }
.grp hr { width: 1px; height: 16px; margin: 0 2px; border: 0; background: #ccc; }
.tri { border: 3px solid transparent; border-top-color: #555; border-bottom: 0; }
.combo { width: 81px; display: flex; align-items: center; padding-right: 6px; margin-right: -1px; }
.combo.small { width: 51px; }
.combo select { flex: 1; min-width: 0; appearance: none; height: 26px; padding: 0 0 0 7px; border: 0; background: none; font-style: italic; color: #888; }
.area { flex: 1; background: #fff; padding: 113px 0 0 449px; overflow: hidden; }
.ibeam { width: 8px; height: 16px; display: block; }
```
